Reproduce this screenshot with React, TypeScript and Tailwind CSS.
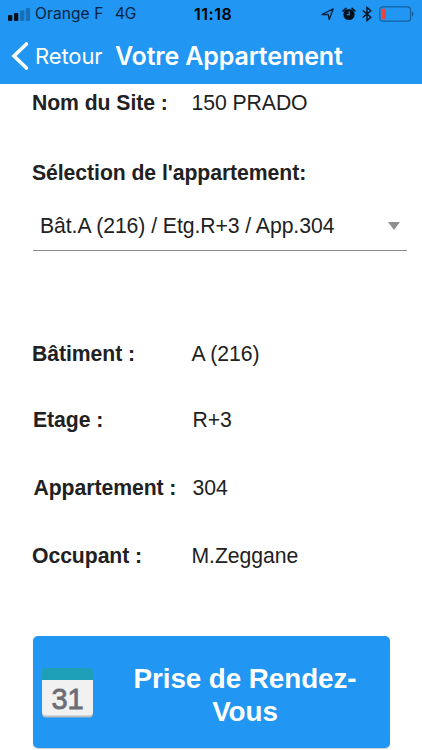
import clsx from "clsx";

type Detail = {
  label: string;
  value: string;
  className?: string;
  labelClass?: string;
  valueClass?: string;
};

const details: Detail[] = [
  { label: "Bâtiment :", value: "A (216)", className: "mt-[91px]" },
  { label: "Etage :", value: "R+3", className: "mt-[42px]", labelClass: "pl-px", valueClass: "pl-px" },
  { label: "Appartement :", value: "304", className: "mt-11", labelClass: "pl-[1.5px]", valueClass: "pl-px" },
  { label: "Occupant :", value: "M.Zeggane", className: "mt-11" },
];

function DetailRow({ label, value, className, labelClass, valueClass }: Detail) {
  return (
    <div className={clsx("flex h-6 whitespace-nowrap", className)}>
      <div className={clsx("w-[159.5px] shrink-0 font-bold", labelClass)}>{label}</div>
      <div className={clsx(valueClass)}>{value}</div>
    </div>
  );
}

function StatusBar() {
  return (
    <div className="flex h-7 items-center text-black">
      <svg className="ml-2 h-[13px] w-[22px] shrink-0" viewBox="0 0 22 13">
        <rect x="0" y="7" width="4.3" height="6" rx="1" fill="#04101c" />
        <rect x="6" y="5" width="4.3" height="8" rx="1" fill="#04101c" />
        <rect x="12" y="2.5" width="4.3" height="10.5" rx="1" fill="#1a70b8" />
        <rect x="17.7" y="0" width="4.3" height="13" rx="1" fill="#1a70b8" />
      </svg>
      <div className="ml-[5px] w-20 text-[15.5px] tracking-[0.1px] text-[#062340]">Orange F</div>
      <div className="w-[79px] text-[15.5px] tracking-[-0.2px] text-[#062340]">4G</div>
      <div className="w-[127px] text-[16px] font-semibold tracking-[0.5px]">11:18</div>
      <svg className="h-[14px] w-[13px] shrink-0" viewBox="0 0 13 14" fill="none" stroke="#06213b" strokeWidth="1.3" strokeLinejoin="round">
        <path d="M.9 7.5 12.2 1.9 8.2 12.6 7.2 7.4Z" />
      </svg>
      <svg className="ml-2 h-[14px] w-[14px] shrink-0" viewBox="0 0 14 14">
        <circle cx="7" cy="7.5" r="5.6" fill="#04101c" />
        <path d="M1 4 4 1.4M13 4 10 1.4" stroke="#04101c" strokeWidth="1.6" strokeLinecap="round" />
        <path d="M7.2 4.3V7.7H4.6" fill="none" stroke="#2196f3" strokeWidth="1.1" />
      </svg>
      <svg className="ml-[6px] h-4 w-[10px] shrink-0" viewBox="0 0 10 16" fill="none" stroke="#04101c" strokeWidth="1.4">
        <path d="M.8 4.5 8.8 11.2 5 14.5V1.5L8.8 4.8.8 11.5" />
      </svg>
      <svg className="ml-[7px] h-4 w-[35px] shrink-0" viewBox="0 0 35 16">
        <rect x=".8" y=".8" width="30.8" height="14.4" rx="3" fill="none" stroke="#15609f" strokeWidth="1.2" />
        <rect x="2.7" y="2.7" width="4.2" height="10.6" rx="1" fill="#e9443f" />
        <path d="M33 5.5Q34.7 6 34.7 8T33 10.5Z" fill="#15609f" />
      </svg>
    </div>
  );
}

export default function App() {
  return (
    <div className="h-[750px] w-[422px] overflow-hidden bg-white font-['Liberation_Sans',Arial,sans-serif] text-[21.2px] leading-6 tracking-[-0.06px] text-[#212121]">
      <header className="h-[84px] bg-[#2196f3] font-['Inter',sans-serif]">
        <StatusBar />
        <div className="flex h-14 items-center whitespace-nowrap text-white">
          <svg className="ml-[11px] h-7 w-[18px] shrink-0" viewBox="0 0 18 28" fill="none" stroke="white" strokeWidth="3.6" strokeLinecap="round">
            <path d="M15.4 2 3 14 15.4 26" />
          </svg>
          <div className="ml-[6px] w-[80px] text-[22px] tracking-[-0.1px]">Retour</div>
          <h1 className="text-[25px] font-semibold tracking-[-0.16px]">Votre Appartement</h1>
        </div>
      </header>

      <main className="pl-8">
        <DetailRow label="Nom du Site :" value="150 PRADO" className="pt-[7px]" />
        <div className="mt-[53px] font-bold">Sélection de l'appartement:</div>

        {/* Apartment picker */}
        <div className="mt-[17px] ml-px flex h-[49px] w-[374px] items-center justify-between border-b border-[#8c8c8c] pr-[7px] pb-px pl-[7px]">
          <span>Bât.A (216) / Etg.R+3 / App.304</span>
          <svg className="h-2 w-3" viewBox="0 0 12 8">
            <path d="M0 0H12L6 8Z" fill="#8f8f8f" />
          </svg>
        </div>

        {details.map((d) => (
          <DetailRow key={d.label} {...d} />
        ))}

        <button className="mt-[68px] ml-px flex h-[112px] w-[357px] items-center rounded-[5px] bg-[#2196f3] pl-2 text-left shadow-[0_1px_1px_rgba(0,0,0,0.2)]">
          <svg className="h-[52px] w-[53px] shrink-0" viewBox="0 0 53 52">
            <rect x="1" y="3" width="51" height="48.5" rx="4" fill="#b9bec2" />
            <rect x="1" y="3" width="51" height="46.5" rx="4" fill="#f1f1f2" />
            <path d="M1 14V5Q1 2 4 2H49Q52 2 52 5V14Z" fill="#1e9fb8" />
            <text x="26.5" y="43" textAnchor="middle" fontSize="29" fill="#6c6d75" stroke="#6c6d75" strokeWidth=".8">
              31
            </text>
          </svg>
          <span className="ml-[8px] flex-1 pt-[5px] pr-[2px] text-center text-[27.8px] leading-[33px] font-bold text-white">
            Prise de Rendez-
            <br />
            Vous
          </span>
        </button>
      </main>
    </div>
  );
}
